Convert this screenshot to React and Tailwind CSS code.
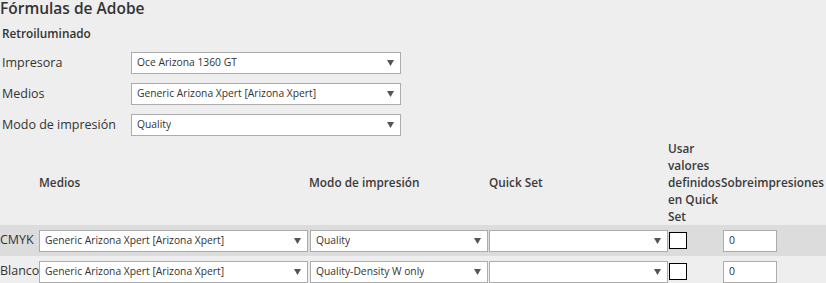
import React from "react";

function Arrow() {
  return (
    <svg width="7" height="6" viewBox="0 0 7 6" className="shrink-0">
      <polygon points="0,0 7,0 3.5,6" fill="#555" />
    </svg>
  );
}

function Select({ value, className = "" }) {
  return (
    <div
      className={`flex h-[22px] items-center justify-between border border-[#acacac] bg-white pl-[5px] pr-[6px] text-[10.3px] text-[#333] ${className}`}
    >
      <span className="truncate whitespace-nowrap">{value}</span>
      <Arrow />
    </div>
  );
}

function FormRow({ label, value }) {
  return (
    <div className="flex h-[22px] items-center">
      <div className="w-[131px] pl-[2px] text-[12.5px]">{label}</div>
      <Select value={value} className="w-[270px]" />
    </div>
  );
}

function TableRow({ label, medios, modo, band }) {
  return (
    <div
      className={`grid h-[31px] grid-cols-[39px_271px_179px_180px_53px_1fr] items-center ${
        band ? "bg-[#dcdcdc]" : ""
      }`}
    >
      <div className="text-[12.5px] whitespace-nowrap">{label}</div>
      <Select value={medios} className="w-[269px]" />
      <Select value={modo} className="w-[178px]" />
      <Select value="" className="w-[179px]" />
      <div className="h-[17px] w-[18px] border border-black bg-white" />
      <div className="pl-[1px]">
        <div className="flex h-[22px] w-[54px] items-center border border-[#acacac] bg-white pl-[5px] text-[10.5px]">
          0
        </div>
      </div>
    </div>
  );
}

export default function App() {
  return (
    <div
      className="h-[283px] w-[826px] overflow-hidden bg-[#eeeeee] text-[#333]"
      style={{ fontFamily: '"Open Sans", "Noto Sans", sans-serif' }}
    >
      <h1 className="text-[15.5px] font-semibold leading-[16px]">
        Fórmulas de Adobe
      </h1>
      <div className="mt-[8px] pl-[2px] text-[11.8px] font-semibold leading-[18px]">
        Retroiluminado
      </div>
      <div className="mt-[10px] flex flex-col gap-[9px]">
        <FormRow label="Impresora" value="Oce Arizona 1360 GT" />
        <FormRow label="Medios" value="Generic Arizona Xpert [Arizona Xpert]" />
        <FormRow label="Modo de impresión" value="Quality" />
      </div>
      <div className="mt-[4px] grid h-[85px] grid-cols-[39px_271px_179px_180px_53px_1fr] items-center text-[11.8px] font-semibold leading-[17px] text-[#3a3a3a]">
        <div />
        <div>Medios</div>
        <div className="-ml-[1px]">Modo de impresión</div>
        <div>Quick Set</div>
        <div className="-ml-[1px] whitespace-nowrap">
          Usar
          <br />
          valores
          <br />
          definidos
          <br />
          en Quick
          <br />
          Set
        </div>
        <div className="-ml-[1px]">Sobreimpresiones</div>
      </div>
      <TableRow
        label="CMYK"
        medios="Generic Arizona Xpert [Arizona Xpert]"
        modo="Quality"
        band
      />
      <TableRow
        label="Blanco"
        medios="Generic Arizona Xpert [Arizona Xpert]"
        modo="Quality-Density W only"
      />
    </div>
  );
}
